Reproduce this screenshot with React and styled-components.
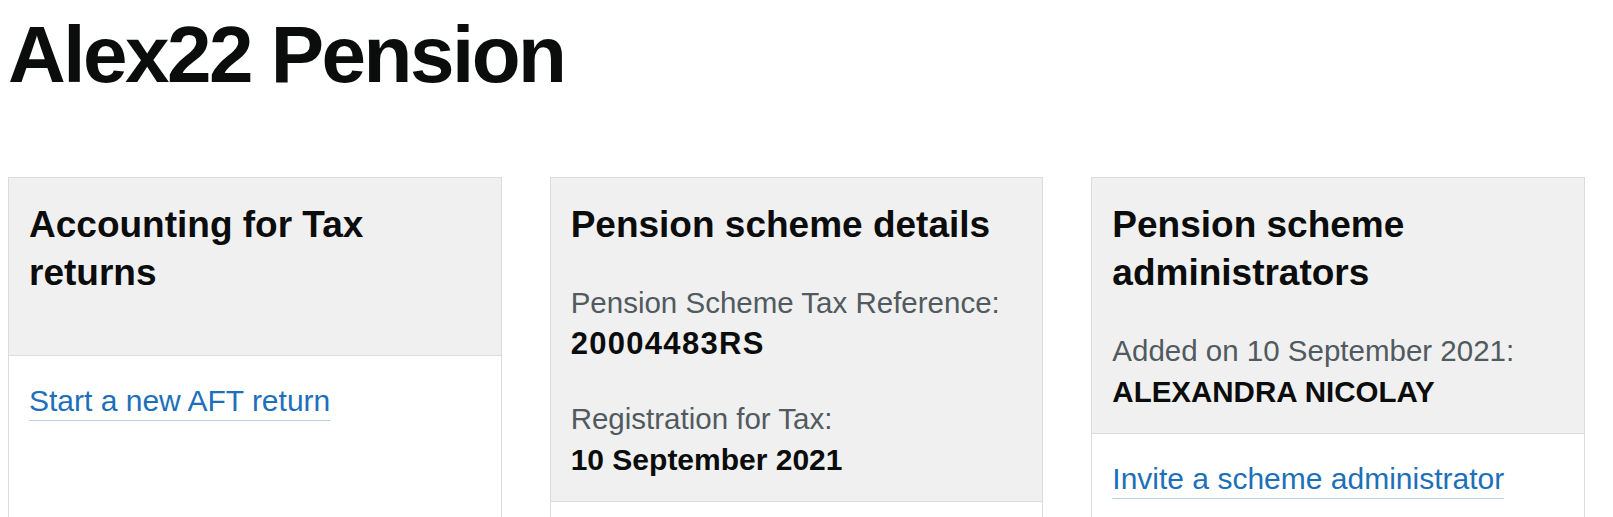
import React from 'react';
import styled, { createGlobalStyle } from 'styled-components';

const GlobalStyle = createGlobalStyle`
  body {
    margin: 0;
    background: #ffffff;
    color: #0b0c0c;
    font-family: "Liberation Sans", Arial, sans-serif;
  }
`;

const Page = styled.main`
  padding: 0 8px;
  width: 1577px;
`;

const Title = styled.h1`
  margin: 10px 0 77px;
  font-size: 80px;
  line-height: 90px;
  font-weight: 700;
  letter-spacing: -2.5px;
`;

const CardGrid = styled.div`
  display: grid;
  grid-template-columns: repeat(3, 1fr);
  column-gap: 48px;
  align-items: stretch;
`;

const Card = styled.section`
  display: flex;
  flex-direction: column;
  border: 1px solid #dcdcdc;
  min-height: 420px;
`;

const CardHeader = styled.div`
  background: #f0f0f0;
  border-bottom: 1px solid #dcdcdc;
  padding: 23px 20px 21px;
`;

const CardTitle = styled.h2`
  margin: 0 0 33px;
  font-size: 37px;
  line-height: 48px;
  font-weight: 700;

  &:last-child {
    margin-bottom: 37px;
  }
`;

const Detail = styled.p`
  margin: 0 0 34px;
  font-size: 29.5px;
  line-height: 41px;
  color: #505a5f;

  &:last-child {
    margin-bottom: 0;
  }
`;

const Value = styled.strong`
  display: block;
  color: #0b0c0c;
  font-weight: 700;
  font-size: ${(p) => p.$size || 29.5}px;
  letter-spacing: ${(p) => p.$spacing || 0}px;
`;

const CardBody = styled.div`
  flex: 1;
  padding: 24px 20px;
`;

const ActionLink = styled.a`
  font-size: 30px;
  line-height: 41px;
  color: #1d70b8;
  text-decoration: underline;
  text-decoration-color: #b7d0e6;
  text-decoration-thickness: 1px;
  text-underline-offset: 9px;
`;

export default function App() {
  return (
    <>
      <GlobalStyle />
      <Page>
        <Title>Alex22 Pension</Title>
        <CardGrid>
          <Card>
            <CardHeader>
              <CardTitle>Accounting for Tax returns</CardTitle>
            </CardHeader>
            <CardBody>
              <ActionLink href="#">Start a new AFT return</ActionLink>
            </CardBody>
          </Card>
          <Card>
            <CardHeader>
              <CardTitle>Pension scheme details</CardTitle>
              <Detail>
                Pension Scheme Tax Reference:
                <Value $size={31} $spacing={1.3}>20004483RS</Value>
              </Detail>
              <Detail>
                Registration for Tax:
                <Value $size={30}>10 September 2021</Value>
              </Detail>
            </CardHeader>
            <CardBody />
          </Card>
          <Card>
            <CardHeader>
              <CardTitle>Pension scheme administrators</CardTitle>
              <Detail>
                Added on 10 September 2021:
                <Value>ALEXANDRA NICOLAY</Value>
              </Detail>
            </CardHeader>
            <CardBody>
              <ActionLink href="#">Invite a scheme administrator</ActionLink>
            </CardBody>
          </Card>
        </CardGrid>
      </Page>
    </>
  );
}
